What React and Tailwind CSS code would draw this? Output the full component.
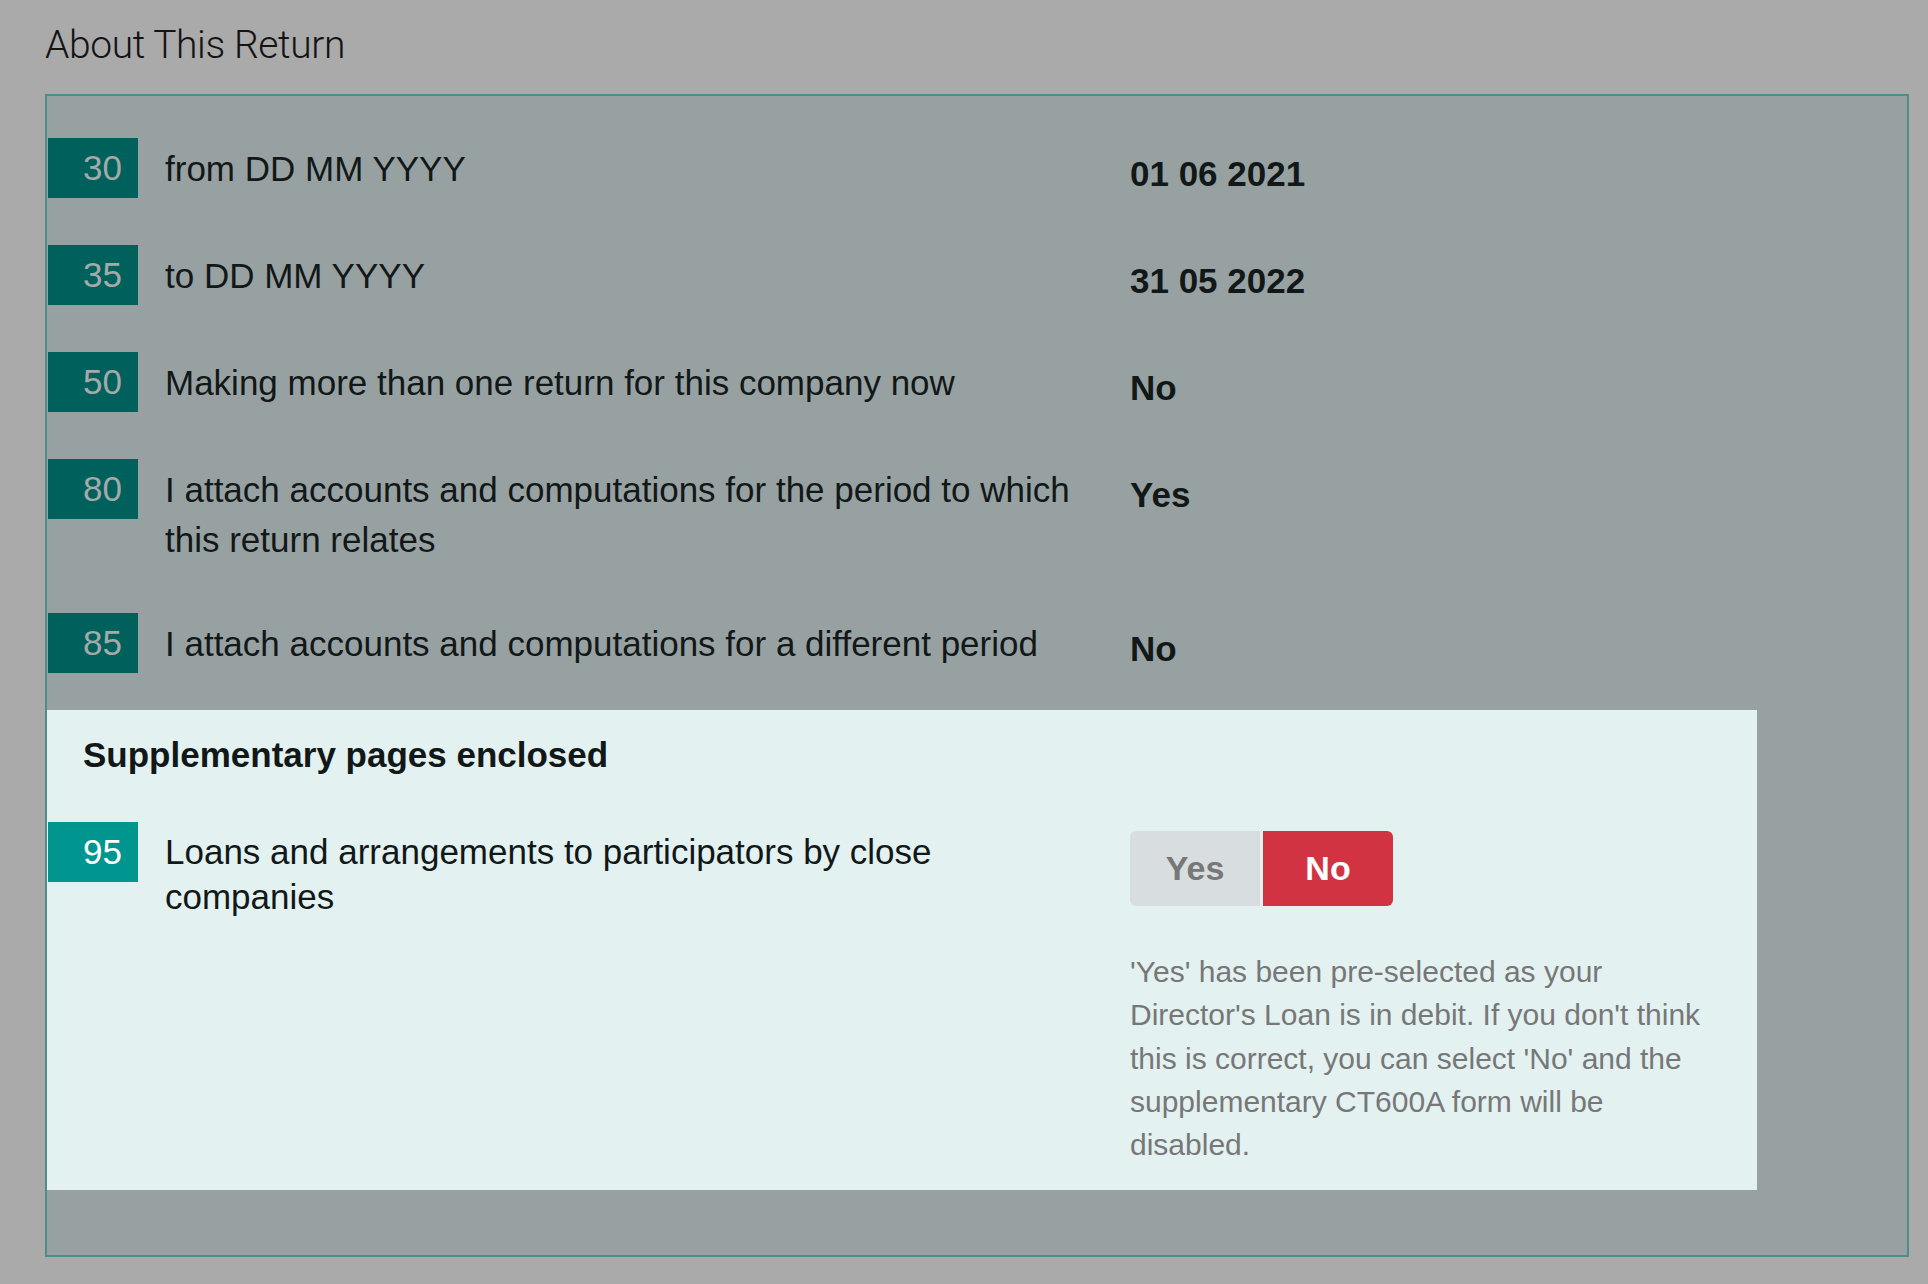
import React from "react";

const rows = [
  { n: "30", label: "from DD MM YYYY", value: "01 06 2021" },
  { n: "35", label: "to DD MM YYYY", value: "31 05 2022" },
  { n: "50", label: "Making more than one return for this company now", value: "No" },
  { n: "80", label: "I attach accounts and computations for the period to which this return relates", value: "Yes" },
  { n: "85", label: "I attach accounts and computations for a different period", value: "No" },
];

function Row({ n, label, value }) {
  return (
    <div className="flex items-start">
      <div className="w-[90px] h-[60px] shrink-0 bg-[#00605c] text-[#a4aaaa] text-[35px] leading-[60px] text-right pr-[16px]">
        {n}
      </div>
      <div className="ml-[27px] w-[938px] shrink-0 pt-[6px] pb-[2px] text-[35px] leading-[50px] text-[#121818]">
        {label}
      </div>
      <div className="ml-[27px] pt-[11px] text-[35px] leading-[50px] font-bold text-[#121818]">
        {value}
      </div>
    </div>
  );
}

export default function App() {
  return (
    <div className="min-h-screen w-full bg-[#aaaaaa] pt-[26px] pl-[45px] font-['Liberation_Sans',Arial,sans-serif]">
      <h1 className="font-['Roboto',sans-serif] font-light text-[39px] leading-[38px] text-[#141414] tracking-[-0.4px]">
        About This Return
      </h1>
      <div className="mt-[30px] w-[1864px] h-[1163px] border-2 border-[#4f8c8c] bg-[#98a1a2]">
        <div className="flex flex-col gap-[46px] pt-[42px] pl-px pb-[36px]">
          {rows.map((r) => (
            <Row key={r.n} {...r} />
          ))}
        </div>
        <section className="w-[1710px] bg-[#e3f1f1] pt-[20px] pb-[24px]">
          <h2 className="ml-[36px] text-[35px] leading-[50px] font-bold text-[#121818]">
            Supplementary pages enclosed
          </h2>
          <div className="mt-[42px] flex items-start pl-px">
            <div className="w-[90px] h-[60px] shrink-0 bg-[#009690] text-white text-[35px] leading-[60px] text-right pr-[16px]">
              95
            </div>
            <div className="ml-[27px] w-[938px] shrink-0 pt-[7px] text-[35px] leading-[45px] text-[#121818]">
              Loans and arrangements to participators by close companies
            </div>
            <div className="ml-[27px] pt-[9px] w-[600px]">
              <div className="flex gap-[3px]">
                <button className="w-[130px] h-[75px] rounded-l-[6px] bg-[#d8dde0] text-[#777777] text-[34px] font-bold">
                  Yes
                </button>
                <button className="w-[130px] h-[75px] rounded-r-[6px] bg-[#d13343] text-white text-[34px] font-bold">
                  No
                </button>
              </div>
              <p className="mt-[44px] w-[600px] text-[30px] leading-[43.3px] text-[#777777]">
                'Yes' has been pre-selected as your Director's Loan is in debit. If you don't think this is correct, you can select 'No' and the supplementary CT600A form will be disabled.
              </p>
            </div>
          </div>
        </section>
      </div>
    </div>
  );
}
